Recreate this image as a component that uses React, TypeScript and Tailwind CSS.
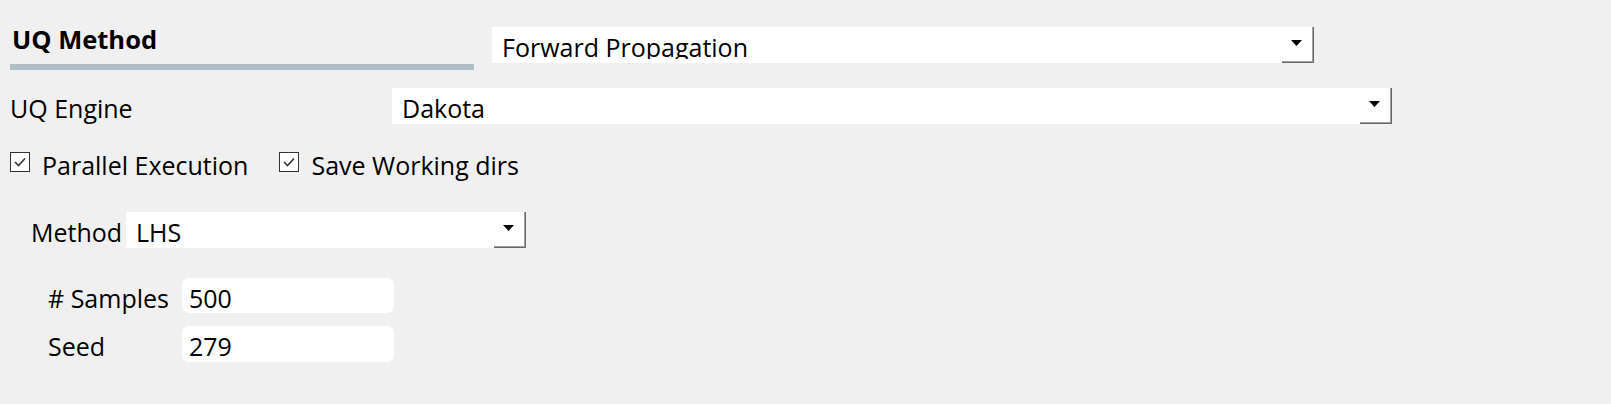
import React from 'react';

const font = { fontFamily: '"Open Sans", "Noto Sans", sans-serif' };

function ComboBox({ value, width, height }: { value: string; width: string; height: string }) {
  return (
    <div className={`${width} ${height} bg-white flex shrink-0`}>
      <div className="flex-1 h-[32px] overflow-hidden pl-[10px] pt-2 leading-6 text-[25px] text-black whitespace-nowrap">
        {value}
      </div>
      <div className="w-[32px] h-full border-r border-b border-[#696969] shadow-[inset_-1px_-1px_0_#a0a0a0] flex justify-center pt-[13px] pr-[3px]">
        <svg width="11" height="6" viewBox="0 0 11 6">
          <polygon points="0,0 11,0 5.5,6" fill="#000" />
        </svg>
      </div>
    </div>
  );
}

function CheckBox({ label }: { label: string }) {
  return (
    <div className="flex items-start">
      <div className="w-[20px] h-[20px] border-[1.5px] border-[#333] bg-white flex items-center justify-center">
        <svg width="14" height="12" viewBox="0 0 14 12">
          <polyline points="2,6 5.5,9.5 12,2.5" fill="none" stroke="#333" strokeWidth="1.6" />
        </svg>
      </div>
      <span className="ml-[12px] pt-[1px] leading-6 text-[25px] text-black">{label}</span>
    </div>
  );
}

function TextInput({ value, height }: { value: string; height: string }) {
  return (
    <div className={`w-[212px] ${height} bg-white rounded-[7px] pl-[7px] pt-2 leading-6 text-[25px] text-black`}>
      {value}
    </div>
  );
}

export default function App() {
  return (
    <div className="w-[1611px] h-[404px] bg-[#f0f0f0] overflow-hidden" style={font}>
      {/* UQ method header + type */}
      <div className="flex h-[70px]">
        <div className="ml-[10px] w-[464px]">
          <div className="pt-[27px] pl-[2px] leading-6 text-[25.5px] font-bold text-black">UQ Method</div>
          <div className="mt-[13px] h-[6px] bg-[#b0bec5]" />
        </div>
        <div className="ml-[18px] mt-[27px]">
          <ComboBox value="Forward Propagation" width="w-[822px]" height="h-[36px]" />
        </div>
      </div>

      {/* engine */}
      <div className="flex mt-[18px] h-[36px]">
        <div className="w-[382px] ml-[10px] pt-2 leading-6 text-[25px] text-black">UQ Engine</div>
        <ComboBox value="Dakota" width="w-[1000px]" height="h-[36px]" />
      </div>

      {/* options */}
      <div className="flex mt-[28px] ml-[10px] gap-[31px]">
        <CheckBox label="Parallel Execution" />
        <CheckBox label="Save Working dirs" />
      </div>

      {/* sampling method */}
      <div className="flex mt-[35px] h-[36px]">
        <div className="w-[95px] ml-[31px] pt-2 leading-6 text-[25px] text-black">Method</div>
        <ComboBox value="LHS" width="w-[400px]" height="h-[36px]" />
      </div>

      <div className="flex mt-[30px] ml-[48px]">
        <div className="w-[134px] pt-2 leading-6 text-[25px] text-black"># Samples</div>
        <TextInput value="500" height="h-[35px]" />
      </div>
      <div className="flex mt-[13px] ml-[48px]">
        <div className="w-[134px] pt-2 leading-6 text-[25px] text-black">Seed</div>
        <TextInput value="279" height="h-[36px]" />
      </div>
    </div>
  );
}
